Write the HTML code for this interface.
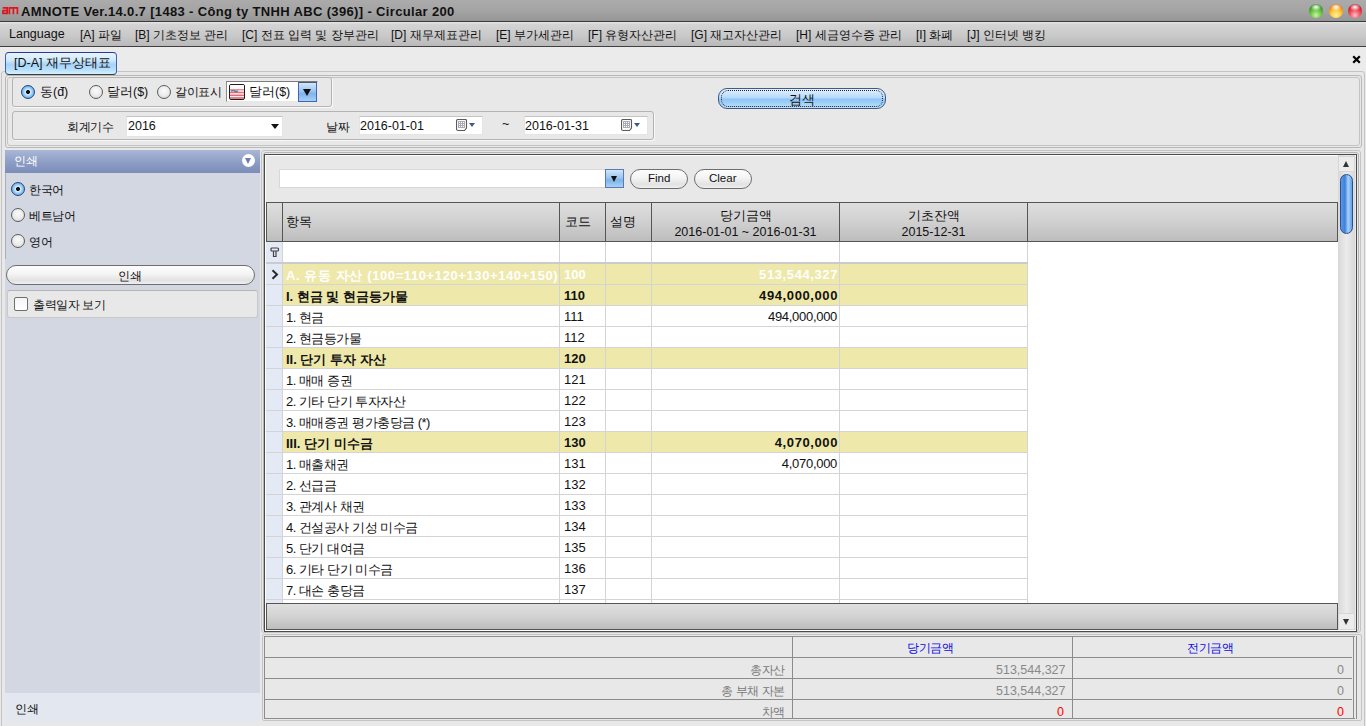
<!DOCTYPE html>
<html><head><meta charset="utf-8">
<style>
*{box-sizing:border-box;margin:0;padding:0}
html,body{width:1366px;height:726px;overflow:hidden;background:#e8e8e8;font-family:"Liberation Sans",sans-serif;font-size:12px;color:#000}
.a{position:absolute}
#title{left:0;top:0;width:1366px;height:22px;background:linear-gradient(#ababab,#a4a4a4 50%,#969696);border-bottom:1px solid #3a3a3a}
#title .t{left:21px;top:4px;font-weight:bold;font-size:13px;color:#111;white-space:nowrap;letter-spacing:0.35px}
#title .logo{left:2px;top:3px;color:#d8101c;font-size:13px;font-weight:bold;letter-spacing:-1px}
.dot{width:14px;height:14px;border-radius:50%;top:4px}
#menu{left:0;top:22px;width:1366px;height:25px;background:linear-gradient(#e6e6e6 0,#d4d4d4 10%,#c8c8c8 60%,#b9b9b9);border-bottom:1px solid #404040}
#menu span{position:absolute;top:5px;white-space:nowrap;font-size:12px;color:#111}
#tabs{left:0;top:47px;width:1366px;height:24px;background:#ebebeb;z-index:5}
.tab{z-index:5;left:5px;top:5px;width:112px;height:23px;border:1px solid #3f62b0;border-top-color:#2b3a98;border-bottom-color:#3a3a3a;border-radius:4px;background:linear-gradient(#e8f5fd,#cfe9fb 35%,#a6d3f7 55%,#b8e0fb 80%,#d4f0ff);font-size:12.5px;padding:2px 0 0 8px;color:#111;white-space:nowrap}

.panel{border:1px solid #b9b9b9;border-radius:3px}
.grp{border:1px solid #b4b4b4;border-radius:3px;box-shadow:1px 1px 0 #f8f8f8}
.radio{width:14px;height:14px;border-radius:50%;border:1.3px solid #5c5c5c;background:radial-gradient(circle at 50% 40%,#fafafa 0,#ececec 50%,#cfcfcf 100%)}
.radio.on{border-color:#2a4478;background:radial-gradient(circle at 50% 50%,#111 0,#111 20%,#d9f0ff 27%,#8cc8f5 55%,#3f86d6 100%)}
.lbl{white-space:nowrap;font-size:12.5px;color:#111}
.inp{background:#fff;border:1px solid #e4e4e4;border-top-color:#c4c4c4}
.btnblue{border:1px solid #3c5988;border-radius:9px;background:linear-gradient(#e5f2fe,#b7dafb 45%,#8ec5f7 55%,#bde0fc)}
.pill{border:1px solid #6e6e6e;border-radius:10px;background:linear-gradient(#fdfdfd,#f4f4f4 45%,#e2e2e2 80%,#efefef)}

#left{left:5px;top:150px;width:255px;height:572px;background:#d2d7e2}
#lhead{left:5px;top:150px;width:255px;height:23px;background:linear-gradient(#a9b7d6,#8a9bc3 60%,#7b8db8);}
.hdr{background:linear-gradient(#dedede,#d0d0d0 50%,#bdbdbd);border-top:1px solid #555;border-bottom:1px solid #555}
.hc{position:absolute;top:0;height:38px;border-right:1px solid #555;font-size:12.5px;color:#111;white-space:nowrap}
.row{position:absolute;left:266px;width:762px;height:21px;border-bottom:1px solid #d4d4d4;background:#fff}
.row.y{background:#eee8aa;font-weight:bold}
.row .c1{letter-spacing:-0.5px}
.row.y .c1{letter-spacing:0}
.k{font-size:12px;letter-spacing:-0.4px}
.row div{position:absolute;top:0;height:20px;border-right:1px solid #d4d4d4;white-space:nowrap;font-size:13px;padding-top:3px;color:#111;overflow:hidden}
.row .sel{left:0;width:17px;background:#e3e9f5;border-right:1px solid #d4d4d4}
.row .c1{left:17px;width:277px;padding-left:3px}
.row .c2{left:294px;width:46px;padding-left:4px}
.row .c3{left:340px;width:46px}
.row .c4{left:386px;width:188px;text-align:right;padding-right:2px;letter-spacing:-0.3px}
.row.y .c4{letter-spacing:0.6px;padding-right:1px}
.row .c5{left:574px;width:188px}
</style></head><body>
<div id="title" class="a">
  <svg class="a" style="left:2px;top:7px" width="17" height="8" viewBox="0 0 17 8"><path d="M0.8 0.9 H5.2 V7.2 M5.2 3.6 H1 V6.4 H5.2 M7.4 7.2 V0.9 H15.4 V7.2 M11.4 0.9 V7.2" fill="none" stroke="#dd1520" stroke-width="1.7"/></svg>
  <div class="a t">AMNOTE Ver.14.0.7 [1483 - Công ty TNHH ABC (396)] - Circular 200</div>
  <div class="a dot" style="left:1309px;background:radial-gradient(ellipse 40% 28% at 50% 22%,#fff 0,rgba(255,255,255,0) 100%),radial-gradient(circle at 50% 80%,#c8f5a0 0,#6cc844 40%,#2f8c18 75%,#1d5a10 100%)"></div>
  <div class="a dot" style="left:1329px;background:radial-gradient(ellipse 40% 28% at 50% 22%,#fff 0,rgba(255,255,255,0) 100%),radial-gradient(circle at 50% 80%,#fff2a0 0,#ffc63a 40%,#e67e12 75%,#8a4a10 100%)"></div>
  <div class="a dot" style="left:1348px;background:radial-gradient(ellipse 40% 28% at 50% 22%,#fff 0,rgba(255,255,255,0) 100%),radial-gradient(circle at 50% 80%,#ffc0c8 0,#f0505e 40%,#c01424 75%,#6a0c14 100%)"></div>
</div>
<div id="menu" class="a">
  <span style="left:9px;font-size:12.5px">Language</span>
  <span style="left:80px">[A] 파일</span>
  <span style="left:135px">[B] 기초정보 관리</span>
  <span style="left:242px">[C] 전표 입력 및 장부관리</span>
  <span style="left:391px">[D] 재무제표관리</span>
  <span style="left:496px">[E] 부가세관리</span>
  <span style="left:588px">[F] 유형자산관리</span>
  <span style="left:691px">[G] 재고자산관리</span>
  <span style="left:796px">[H] 세금영수증 관리</span>
  <span style="left:916px">[I] 화폐</span>
  <span style="left:967px">[J] 인터넷 뱅킹</span>
</div>
<div id="tabs" class="a">
  <div class="a tab">[D-A] 재무상태표</div>
  <svg class="a" style="left:1352px;top:8px" width="9" height="9" viewBox="0 0 9 9"><path d="M1.2 1.2 L7.8 7.8 M7.8 1.2 L1.2 7.8" stroke="#000" stroke-width="2.2"/></svg>
</div>

<!-- main outer panel -->
<div class="a panel" style="left:1px;top:71px;width:1364px;height:660px;border-color:#c4c4c4"></div>
<div class="a panel" style="left:5px;top:75px;width:1357px;height:73px;border-color:#b8b8b8"></div>
<div class="a panel" style="left:7px;top:77px;width:1353px;height:69px;border-color:#c4c4c4"></div>
<!-- radio group -->
<div class="a grp" style="left:12px;top:77px;width:320px;height:30px"></div>
<div class="a radio on" style="left:21px;top:85px"></div>
<div class="a lbl" style="left:40px;top:84px">동(đ)</div>
<div class="a radio" style="left:89px;top:85px"></div>
<div class="a lbl" style="left:107px;top:84px">달러($)</div>
<div class="a radio" style="left:157px;top:85px"></div>
<div class="a lbl k" style="left:175px;top:84px">갈이표시</div>
<div class="a" style="left:226px;top:81px;width:92px;height:21px;background:#fff;border:1px solid #e8e8e8;border-top-color:#7c7c7c;border-left-color:#8c8c8c"></div>
<svg class="a" style="left:229px;top:84px" width="16" height="16" viewBox="0 0 16 16"><defs><linearGradient id="fg" x1="0" y1="0" x2="0" y2="1"><stop offset="0" stop-color="#fff" stop-opacity="0.85"/><stop offset="0.45" stop-color="#fff" stop-opacity="0.2"/><stop offset="1" stop-color="#fff" stop-opacity="0.1"/></linearGradient></defs><rect x="0.5" y="0.5" width="15" height="15" rx="1.5" fill="#f6eeee" stroke="#1e1e1e"/><g fill="#e0505c"><rect x="1" y="5" width="14" height="1.4"/><rect x="1" y="7.8" width="14" height="1.4"/><rect x="1" y="10.6" width="14" height="1.4"/><rect x="1" y="13.2" width="14" height="1.6"/></g><path d="M2 7.2 Q4 6 6 7 T9 6.6" stroke="#2e4e96" stroke-width="1.4" fill="none"/><rect x="1" y="1" width="14" height="14" fill="url(#fg)"/></svg>
<div class="a lbl" style="left:249px;top:84px">달러($)</div>
<div class="a" style="left:298px;top:82px;width:19px;height:20px;border:1px solid #3f66b0;border-top-color:#505a70;background:linear-gradient(#d2e6fa,#9cc6f0 45%,#80b4ea 60%,#a8d0f6)"></div>
<div class="a" style="left:303px;top:89px;width:0;height:0;border-left:4.5px solid transparent;border-right:4.5px solid transparent;border-top:7px solid #111"></div>
<!-- date group -->
<div class="a grp" style="left:12px;top:111px;width:642px;height:29px"></div>
<div class="a lbl k" style="left:67px;top:119px">회계기수</div>
<div class="a inp" style="left:126px;top:116px;width:157px;height:21px"></div>
<div class="a lbl" style="left:128px;top:119px">2016</div>
<div class="a" style="left:271px;top:124px;border-left:4.5px solid transparent;border-right:4.5px solid transparent;border-top:5px solid #111"></div>
<div class="a lbl k" style="left:326px;top:119px">날짜</div>
<div class="a inp" style="left:359px;top:116px;width:124px;height:19px"></div>
<div class="a lbl" style="left:360px;top:119px">2016-01-01</div>
<svg class="a" style="left:456px;top:119px" width="12" height="13" viewBox="0 0 12 13"><path d="M2 0.5 H9.5 Q10.5 0.5 10.5 1.5 V9 L8.5 11.5 H2 Q0.5 11.5 0.5 10 V2 Q0.5 0.5 2 0.5 Z" fill="#fafafa" stroke="#5e5a58" stroke-width="1.1"/><rect x="2" y="2" width="7" height="7" fill="#a8acb8"/><g fill="#fff"><rect x="3" y="3" width="1" height="1"/><rect x="5" y="3" width="1" height="1"/><rect x="7" y="3" width="1" height="1"/><rect x="3" y="5" width="1" height="1"/><rect x="5" y="5" width="1" height="1"/><rect x="7" y="5" width="1" height="1"/><rect x="3" y="7" width="1" height="1"/><rect x="5" y="7" width="1" height="1"/><rect x="7" y="7" width="1" height="1"/></g></svg>
<div class="a" style="left:469px;top:123px;border-left:3.5px solid transparent;border-right:3.5px solid transparent;border-top:4px solid #3e5a8c"></div>
<div class="a lbl" style="left:502px;top:117px">~</div>
<div class="a inp" style="left:524px;top:116px;width:124px;height:19px"></div>
<div class="a lbl" style="left:525px;top:119px">2016-01-31</div>
<svg class="a" style="left:621px;top:119px" width="12" height="13" viewBox="0 0 12 13"><path d="M2 0.5 H9.5 Q10.5 0.5 10.5 1.5 V9 L8.5 11.5 H2 Q0.5 11.5 0.5 10 V2 Q0.5 0.5 2 0.5 Z" fill="#fafafa" stroke="#5e5a58" stroke-width="1.1"/><rect x="2" y="2" width="7" height="7" fill="#a8acb8"/><g fill="#fff"><rect x="3" y="3" width="1" height="1"/><rect x="5" y="3" width="1" height="1"/><rect x="7" y="3" width="1" height="1"/><rect x="3" y="5" width="1" height="1"/><rect x="5" y="5" width="1" height="1"/><rect x="7" y="5" width="1" height="1"/><rect x="3" y="7" width="1" height="1"/><rect x="5" y="7" width="1" height="1"/><rect x="7" y="7" width="1" height="1"/></g></svg>
<div class="a" style="left:634px;top:123px;border-left:3.5px solid transparent;border-right:3.5px solid transparent;border-top:4px solid #3e5a8c"></div>
<!-- search button -->
<div class="a btnblue" style="left:718px;top:88px;width:168px;height:21px"></div>
<div class="a" style="left:721px;top:90px;width:162px;height:17px;border:1px dotted #222;border-radius:7px"></div>
<div class="a lbl k" style="left:789px;top:91px;font-size:13px">검색</div>

<!-- left panel -->
<div id="left" class="a"></div>
<div id="lhead" class="a"></div>
<div class="a lbl k" style="left:14px;top:153px;color:#fff">인쇄</div>
<div class="a" style="left:242px;top:154px;width:13px;height:13px;border-radius:50%;background:#fff"></div>
<div class="a" style="left:245px;top:158px;border-left:3.5px solid transparent;border-right:3.5px solid transparent;border-top:6px solid #6a7fae"></div>
<div class="a radio on" style="left:11px;top:182px"></div>
<div class="a lbl k" style="left:29px;top:182px">한국어</div>
<div class="a radio" style="left:11px;top:208px"></div>
<div class="a lbl k" style="left:29px;top:208px">베트남어</div>
<div class="a radio" style="left:11px;top:234px"></div>
<div class="a lbl k" style="left:29px;top:234px">영어</div>
<div class="a pill" style="left:6px;top:265px;width:249px;height:20px"></div>
<div class="a lbl k" style="left:118px;top:268px">인쇄</div>
<div class="a" style="left:7px;top:290px;width:251px;height:28px;background:#e8e8e8;border:1px solid #c8c8c8;border-top-color:#b4b4b4;border-radius:3px"></div>
<div class="a" style="left:14px;top:297px;width:14px;height:14px;border:1px solid #6f6f6f;border-radius:2px;background:linear-gradient(#f5f5f5,#fff)"></div>
<div class="a lbl k" style="left:33px;top:297px">출력일자 보기</div>
<div class="a" style="left:5px;top:693px;width:255px;height:29px;background:#e2e7f0"></div>
<div class="a" style="left:5px;top:173px;width:1px;height:86px;background:#a9afbd"></div>
<div class="a lbl k" style="left:15px;top:701px">인쇄</div>

<!-- grid panel -->
<div class="a" style="left:261px;top:150px;width:1100px;height:483px;border:1px solid #c4c4c4;border-radius:3px;background:#e8e8e8"></div>
<div class="a" style="left:263px;top:152px;width:1096px;height:480px;border:1px solid #b4b4b4;border-radius:3px"></div>
<div class="a" style="left:264px;top:154px;width:1093px;height:478px;border:1px solid #4a4a4a;background:#e8e8e8;box-shadow:inset 1px 1px 0 #fff,inset 0 -1px 0 #fff"></div>
<div class="a inp" style="left:279px;top:169px;width:327px;height:19px;border:1px solid #d8d8d8"></div>
<div class="a" style="left:605px;top:169px;width:19px;height:19px;border:1px solid #5a7ab0;background:linear-gradient(#d2e6fa,#9cc6f0 45%,#80b4ea 60%,#a8d0f6)"></div>
<div class="a" style="left:611px;top:176px;border-left:3.5px solid transparent;border-right:3.5px solid transparent;border-top:6px solid #111"></div>
<div class="a pill" style="left:630px;top:169px;width:58px;height:20px"></div>
<div class="a lbl" style="left:648px;top:172px;font-size:11.5px">Find</div>
<div class="a pill" style="left:694px;top:169px;width:58px;height:20px"></div>
<div class="a lbl" style="left:709px;top:172px;font-size:11.5px">Clear</div>

<!-- header -->
<div class="a hdr" style="left:266px;top:202px;width:1072px;height:40px;border-left:1px solid #555;border-right:1px solid #555">
  <div class="hc" style="left:0;width:16px"></div>
  <div class="hc" style="left:16px;width:277px;padding:11px 0 0 3px">항목</div>
  <div class="hc" style="left:293px;width:46px;padding:11px 0 0 5px">코드</div>
  <div class="hc" style="left:339px;width:46px;padding:11px 0 0 4px">설명</div>
  <div class="hc" style="left:385px;width:188px;padding:5px 0 0 0;text-align:center;line-height:16px">당기금액<br>2016-01-01 ~ 2016-01-31</div>
  <div class="hc" style="left:573px;width:188px;padding:5px 0 0 0;text-align:center;line-height:16px">기초잔액<br>2015-12-31</div>
</div>
<div class="a" style="left:266px;top:242px;width:1072px;height:361px;background:#fff"></div>
<div class="row" style="top:242px;height:22px;border-bottom:2px solid #cbcbcb"><div class="sel"></div><div class="c1"></div><div class="c2"></div><div class="c3"></div><div class="c4"></div><div class="c5"></div></div>
<div class="row y" style="top:264px"><div class="sel"></div><div class="c1" style="color:#fff;letter-spacing:0.6px">A. 유동 자산 (100=110+120+130+140+150)</div><div class="c2" style="color:#fff">100</div><div class="c3"></div><div class="c4" style="color:#fff">513,544,327</div><div class="c5"></div></div>
<div class="row y" style="top:285px"><div class="sel"></div><div class="c1">I. 현금 및 현금등가물</div><div class="c2">110</div><div class="c3"></div><div class="c4">494,000,000</div><div class="c5"></div></div>
<div class="row" style="top:306px"><div class="sel"></div><div class="c1">1. 현금</div><div class="c2">111</div><div class="c3"></div><div class="c4">494,000,000</div><div class="c5"></div></div>
<div class="row" style="top:327px"><div class="sel"></div><div class="c1">2. 현금등가물</div><div class="c2">112</div><div class="c3"></div><div class="c4"></div><div class="c5"></div></div>
<div class="row y" style="top:348px"><div class="sel"></div><div class="c1">II. 단기 투자 자산</div><div class="c2">120</div><div class="c3"></div><div class="c4"></div><div class="c5"></div></div>
<div class="row" style="top:369px"><div class="sel"></div><div class="c1">1. 매매 증권</div><div class="c2">121</div><div class="c3"></div><div class="c4"></div><div class="c5"></div></div>
<div class="row" style="top:390px"><div class="sel"></div><div class="c1">2. 기타 단기 투자자산</div><div class="c2">122</div><div class="c3"></div><div class="c4"></div><div class="c5"></div></div>
<div class="row" style="top:411px"><div class="sel"></div><div class="c1">3. 매매증권 평가충당금 (*)</div><div class="c2">123</div><div class="c3"></div><div class="c4"></div><div class="c5"></div></div>
<div class="row y" style="top:432px"><div class="sel"></div><div class="c1">III. 단기 미수금</div><div class="c2">130</div><div class="c3"></div><div class="c4">4,070,000</div><div class="c5"></div></div>
<div class="row" style="top:453px"><div class="sel"></div><div class="c1">1. 매출채권</div><div class="c2">131</div><div class="c3"></div><div class="c4">4,070,000</div><div class="c5"></div></div>
<div class="row" style="top:474px"><div class="sel"></div><div class="c1">2. 선급금</div><div class="c2">132</div><div class="c3"></div><div class="c4"></div><div class="c5"></div></div>
<div class="row" style="top:495px"><div class="sel"></div><div class="c1">3. 관계사 채권</div><div class="c2">133</div><div class="c3"></div><div class="c4"></div><div class="c5"></div></div>
<div class="row" style="top:516px"><div class="sel"></div><div class="c1">4. 건설공사 기성 미수금</div><div class="c2">134</div><div class="c3"></div><div class="c4"></div><div class="c5"></div></div>
<div class="row" style="top:537px"><div class="sel"></div><div class="c1">5. 단기 대여금</div><div class="c2">135</div><div class="c3"></div><div class="c4"></div><div class="c5"></div></div>
<div class="row" style="top:558px"><div class="sel"></div><div class="c1">6. 기타 단기 미수금</div><div class="c2">136</div><div class="c3"></div><div class="c4"></div><div class="c5"></div></div>
<div class="row" style="top:579px"><div class="sel"></div><div class="c1">7. 대손 충당금</div><div class="c2">137</div><div class="c3"></div><div class="c4"></div><div class="c5"></div></div>
<div class="row" style="top:600px;height:3px;border-bottom:0"><div class="sel" style="height:3px"></div><div class="c1" style="height:3px"></div><div class="c2" style="height:3px"></div><div class="c3" style="height:3px"></div><div class="c4" style="height:3px"></div><div class="c5" style="height:3px"></div></div>
<svg class="a" style="left:271px;top:269px" width="8" height="11" viewBox="0 0 8 11"><path d="M1.5 1.2 L6 5.5 L1.5 9.8" fill="none" stroke="#2a2a2a" stroke-width="2"/></svg>
<svg class="a" style="left:270px;top:247px" width="10" height="11" viewBox="0 0 10 11"><path d="M2 1 H7.5 Q8.5 1 8.5 2 V3 Q8.5 4 7.5 4 H2 Q1 4 1 3 V2 Q1 1 2 1 Z M3.5 4 V9.5 H6 V4" fill="none" stroke="#444" stroke-width="1.2"/></svg>
<!-- footer bar -->
<div class="a" style="left:266px;top:603px;width:1072px;height:27px;border:1px solid #555;background:linear-gradient(#e0e0e0,#d2d2d2 50%,#bdbdbd)"></div>
<!-- scrollbar -->
<div class="a" style="left:1338px;top:155px;width:17px;height:475px;background:linear-gradient(90deg,#d8d8d8,#ebebeb 50%,#d8d8d8)"></div>
<div class="a" style="left:1338px;top:156px;width:17px;height:16px;background:#ececec;border:1px solid #d6d6d6"></div>
<div class="a" style="left:1343px;top:161px;border-left:3.5px solid transparent;border-right:3.5px solid transparent;border-bottom:6px solid #333"></div>
<div class="a" style="left:1340px;top:174px;width:13px;height:60px;border-radius:7px;border:1px solid #2d4f8a;background:linear-gradient(90deg,#5a9ae8,#3f7fd8 35%,#a6d2ff 65%,#5f9fe8)"></div>
<div class="a" style="left:1338px;top:613px;width:17px;height:17px;background:#ececec;border:1px solid #d6d6d6"></div>
<div class="a" style="left:1343px;top:619px;border-left:3.5px solid transparent;border-right:3.5px solid transparent;border-top:6px solid #333"></div>

<!-- summary -->
<div class="a" style="left:262px;top:634px;width:1100px;height:87px;border:1px solid #c4c4c4;border-radius:2px"></div>
<div class="a" style="left:264px;top:636px;width:1093px;height:83px;border:1px solid #8c8c8c;border-right:4px double #8c8c8c;background:#e8e8e8"></div>
<div class="a" style="left:265px;top:657px;width:1087px;height:1px;background:#8c8c8c"></div>
<div class="a" style="left:265px;top:678px;width:1087px;height:1px;background:#8c8c8c"></div>
<div class="a" style="left:265px;top:699px;width:1087px;height:1px;background:#8c8c8c"></div>
<div class="a" style="left:792px;top:636px;width:1px;height:83px;background:#8c8c8c"></div>
<div class="a" style="left:1072px;top:636px;width:1px;height:83px;background:#8c8c8c"></div>
<div class="a lbl k" style="left:907px;top:640px;color:#0a0ae6">당기금액</div>
<div class="a lbl k" style="left:1187px;top:640px;color:#0a0ae6">전기금액</div>
<div class="a lbl k" style="left:600px;width:185px;text-align:right;top:662px;color:#777">총자산</div>
<div class="a lbl k" style="left:600px;width:185px;text-align:right;top:683px;color:#777">총 부채 자본</div>
<div class="a lbl k" style="left:600px;width:185px;text-align:right;top:704px;color:#777">차액</div>
<div class="a lbl" style="left:996px;top:663px;color:#888">513,544,327</div>
<div class="a lbl" style="left:996px;top:684px;color:#888">513,544,327</div>
<div class="a lbl" style="left:1057px;top:705px;color:#f00">0</div>
<div class="a lbl" style="left:1337px;top:663px;color:#888">0</div>
<div class="a lbl" style="left:1337px;top:684px;color:#888">0</div>
<div class="a lbl" style="left:1337px;top:705px;color:#f00">0</div>
</body></html>
